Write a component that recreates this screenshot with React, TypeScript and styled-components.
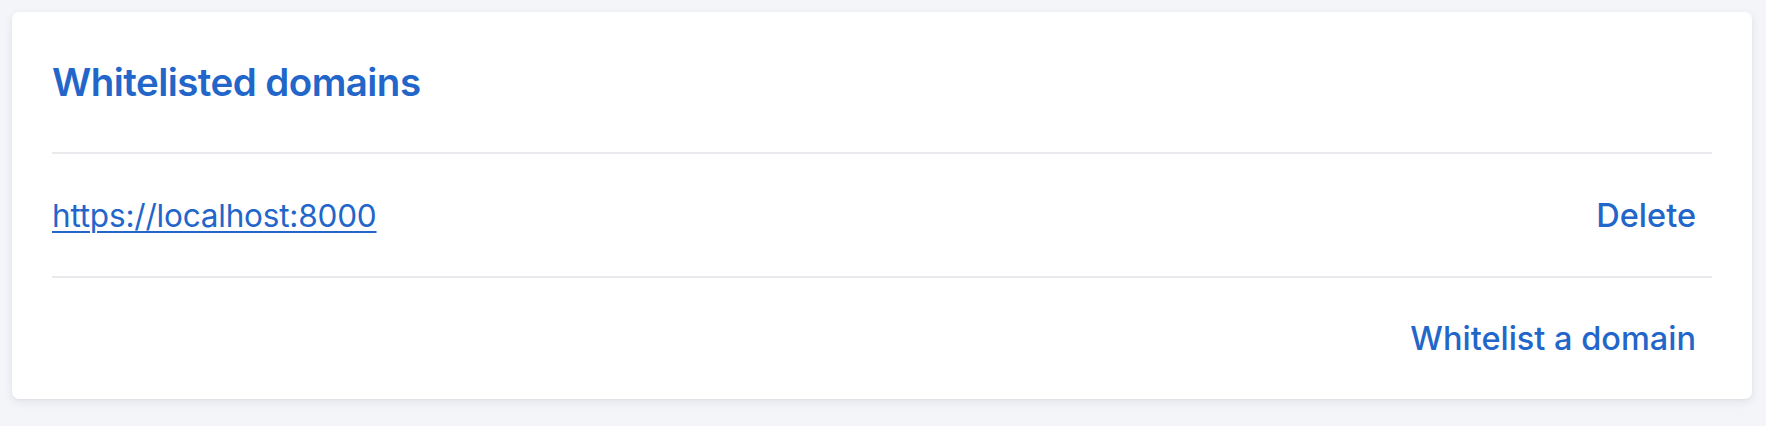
import styled, { createGlobalStyle } from "styled-components";

const GlobalStyle = createGlobalStyle`
  html, body {
    margin: 0;
    padding: 0;
    background: #f4f5f9;
    font-family: Inter, "Liberation Sans", sans-serif;
  }
`;

const Page = styled.div`
  padding: 12px 14px 12px 12px;
  box-sizing: border-box;
`;

const Card = styled.section`
  background: #ffffff;
  border-radius: 7px;
  box-shadow: 0 3px 10px rgba(20, 30, 60, 0.08), 0 1px 2px rgba(20, 30, 60, 0.04);
  padding: 0 40px;
`;

const Header = styled.div`
  height: 140px;
  display: flex;
  align-items: center;
  border-bottom: 2px solid #e9e9ee;
`;

const Title = styled.h2`
  margin: 0;
  font-size: 38.5px;
  font-weight: 600;
  letter-spacing: -0.55px;
  color: #2366c9;
`;

const Row = styled.div<{ $last?: boolean }>`
  height: ${(p) => (p.$last ? "121px" : "122px")};
  display: flex;
  align-items: center;
  justify-content: space-between;
  border-bottom: ${(p) => (p.$last ? "none" : "2px solid #e9e9ee")};
`;

const DomainLink = styled.a`
  font-size: 31.5px;
  font-weight: 400;
  letter-spacing: -0.2px;
  color: #2366c9;
  text-decoration: underline;
  text-decoration-thickness: 2px;
  text-underline-offset: 4px;
`;

const TextButton = styled.button`
  border: none;
  background: none;
  padding: 0 16px;
  font-family: inherit;
  font-size: 32.5px;
  font-weight: 500;
  color: #2366c9;
  cursor: pointer;
  margin-left: auto;
`;

const domains = ["https://localhost:8000"];

function App() {
  return (
    <Page>
      <GlobalStyle />
      <Card>
        <Header>
          <Title>Whitelisted domains</Title>
        </Header>
        {domains.map((d) => (
          <Row key={d}>
            <DomainLink href="#">{d}</DomainLink>
            <TextButton>Delete</TextButton>
          </Row>
        ))}
        <Row $last>
          <TextButton>Whitelist a domain</TextButton>
        </Row>
      </Card>
    </Page>
  );
}

export default App;
